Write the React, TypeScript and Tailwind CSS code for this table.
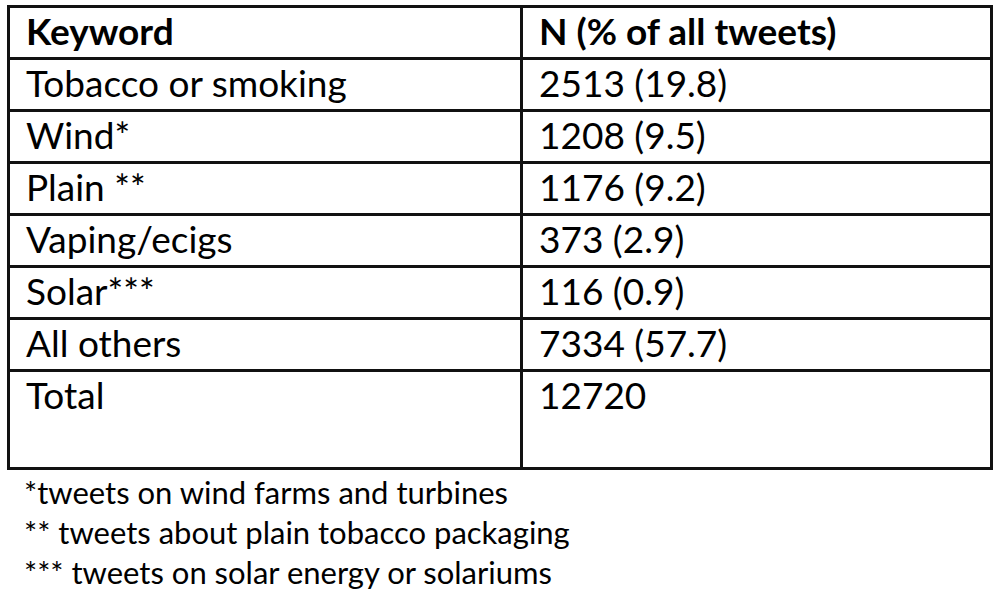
import React from "react";

const rows: [string, string][] = [
  ["Tobacco or smoking", "2513 (19.8)"],
  ["Wind*", "1208 (9.5)"],
  ["Plain **", "1176 (9.2)"],
  ["Vaping/ecigs", "373 (2.9)"],
  ["Solar***", "116 (0.9)"],
  ["All others", "7334 (57.7)"],
];

const cell =
  "border-[3px] border-[#111] pl-[16px] align-top pt-[2px] text-[37px] leading-[42px]";

export default function App() {
  return (
    <div
      className="w-[1000px] h-[594px] bg-white text-black overflow-hidden"
      style={{ fontFamily: "Lato, 'Open Sans', sans-serif" }}
    >
      <div className="pt-[5px] pl-[7px]">
        <table className="border-collapse w-[983px] table-fixed">
          <colgroup>
            <col className="w-[513px]" />
            <col className="w-[470px]" />
          </colgroup>
          <tbody>
            <tr className="h-[52px]">
              <td className={cell + " font-bold"}>Keyword</td>
              <td className={cell + " font-bold"}>N (% of all tweets)</td>
            </tr>
            {rows.map(([k, v]) => (
              <tr key={k} className="h-[52px]">
                <td className={cell}>{k}</td>
                <td className={cell}>{v}</td>
              </tr>
            ))}
            <tr className="h-[98px]">
              <td className={cell}>Total</td>
              <td className={cell}>12720</td>
            </tr>
          </tbody>
        </table>
        <div className="pl-[17px] pt-[2px] text-[31px] leading-[40px]">
          <div>*tweets on wind farms and turbines</div>
          <div>** tweets about plain tobacco packaging</div>
          <div>*** tweets on solar energy or solariums</div>
        </div>
      </div>
    </div>
  );
}
